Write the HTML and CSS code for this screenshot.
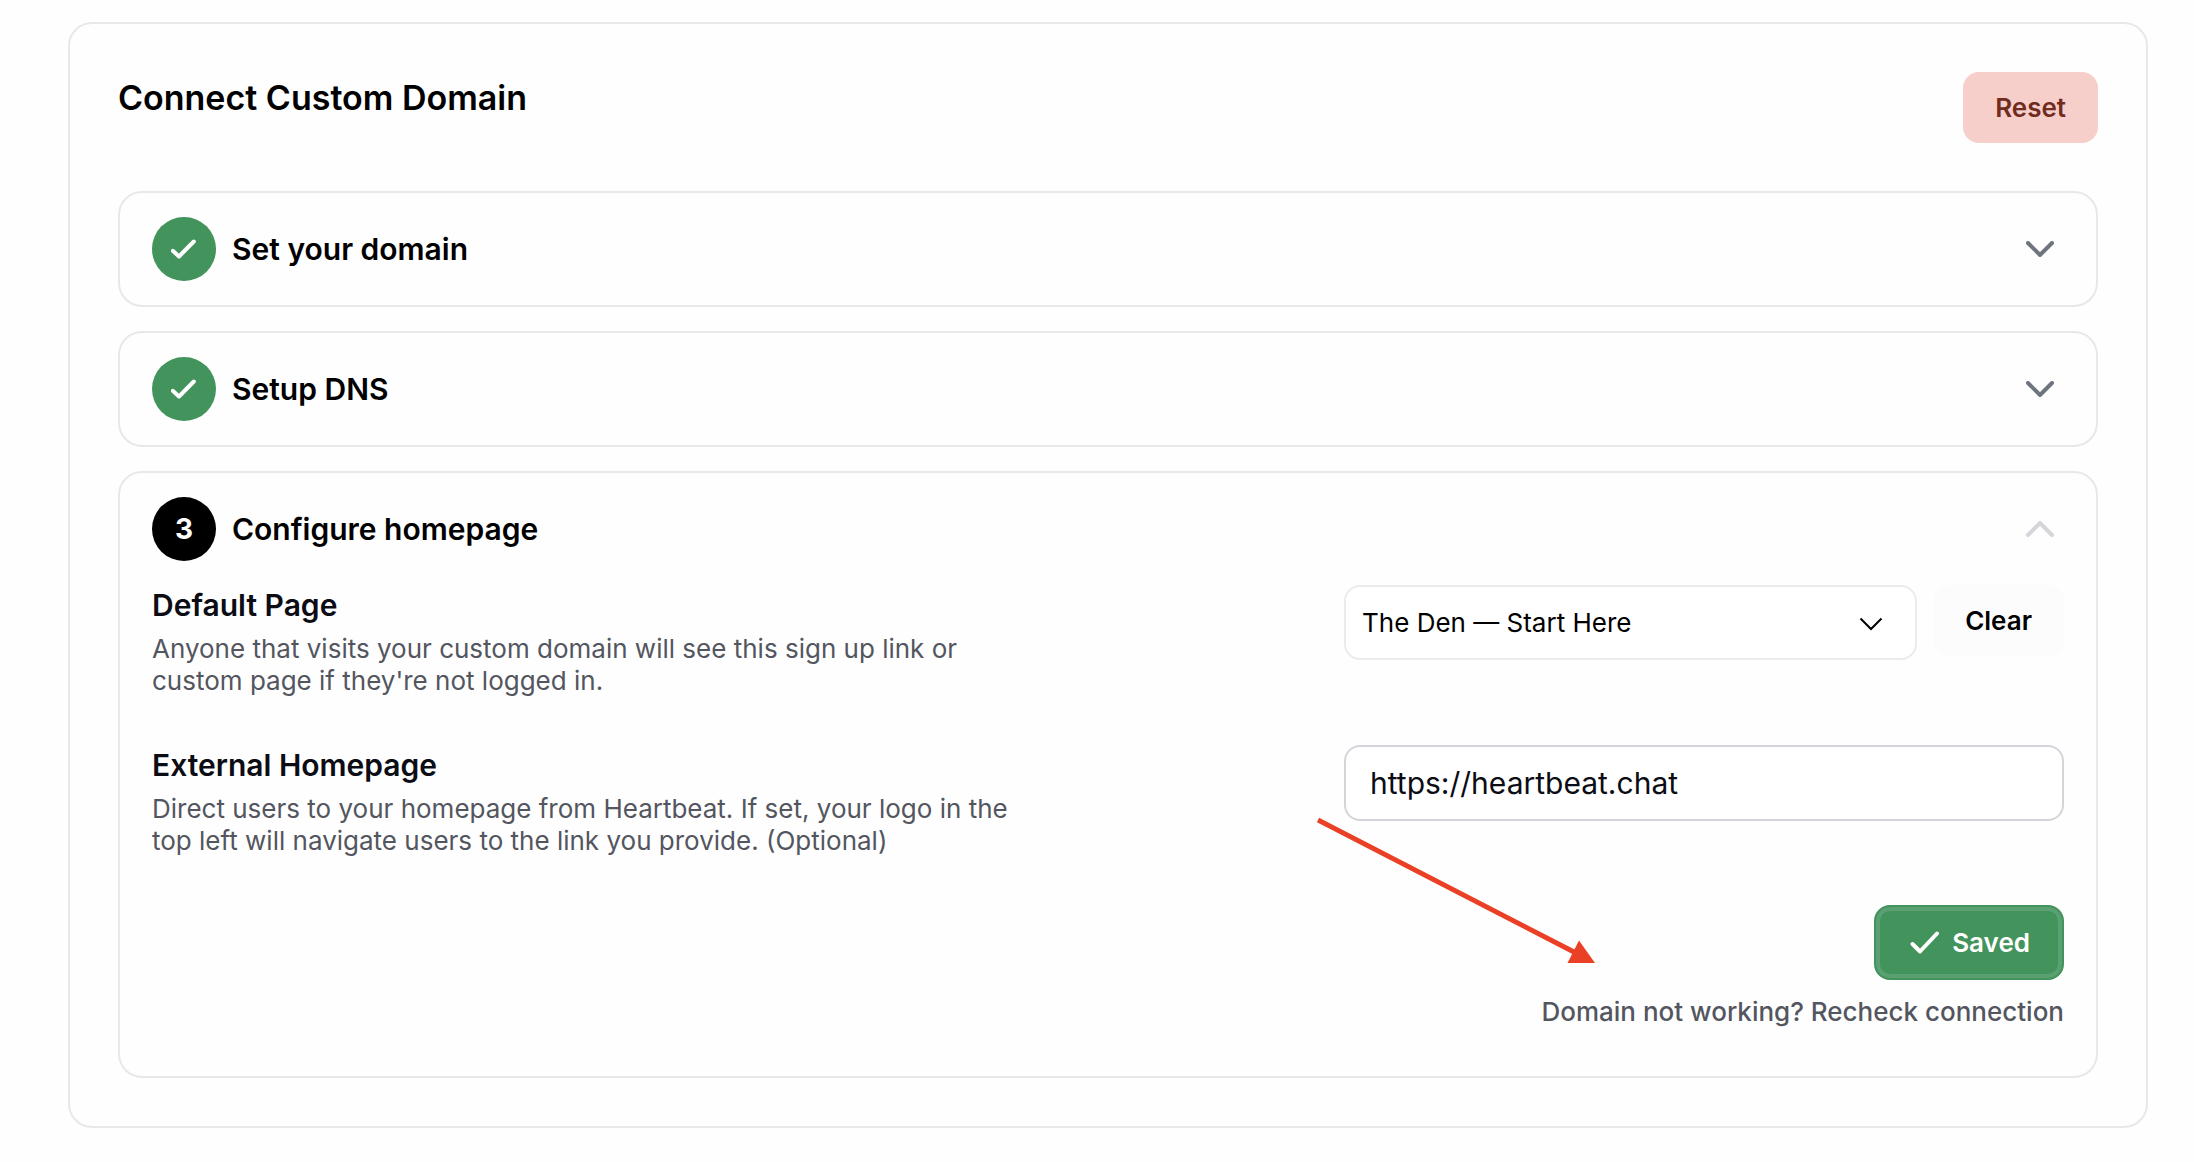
FILE: index.html
```html
<!DOCTYPE html>
<html lang="en">
<head>
    <meta charset="UTF-8">
    <meta name="viewport" content="width=device-width, initial-scale=1.0">
    <title>Connect Custom Domain</title>
    <link rel="stylesheet" href="styles.css">
</head>
<body>

    <main class="card">
        <header class="card-header">
            <h1>Connect Custom Domain</h1>
            <button type="button" class="btn btn-danger">Reset</button>
        </header>

        <div class="steps">
            <section class="step">
                <button type="button" class="step-header" aria-expanded="false">
                    <span class="step-badge done">
                        <svg width="26" height="20" viewBox="0 0 26 20" aria-hidden="true">
                            <path d="M1.800 11.800 L8 17.500 L22.800 2.500" />
                        </svg>
                    </span>
                    <span class="step-title">Set your domain</span>
                    <svg class="step-chevron" width="28" height="16" viewBox="0 0 28 16" aria-hidden="true">
                        <path d="M2 2 L14 14 L26 2" />
                    </svg>
                </button>
            </section>

            <section class="step">
                <button type="button" class="step-header" aria-expanded="false">
                    <span class="step-badge done">
                        <svg width="26" height="20" viewBox="0 0 26 20" aria-hidden="true">
                            <path d="M1.800 11.800 L8 17.500 L22.800 2.500" />
                        </svg>
                    </span>
                    <span class="step-title">Setup DNS</span>
                    <svg class="step-chevron" width="28" height="16" viewBox="0 0 28 16" aria-hidden="true">
                        <path d="M2 2 L14 14 L26 2" />
                    </svg>
                </button>
            </section>

            <section class="step">
                <button type="button" class="step-header" aria-expanded="true">
                    <span class="step-badge">3</span>
                    <span class="step-title">Configure homepage</span>
                    <svg class="step-chevron open" width="28" height="16" viewBox="0 0 28 16" aria-hidden="true">
                        <path d="M2 14 L14 2 L26 14" />
                    </svg>
                </button>

                <form class="step-body">
                    <div class="field">
                        <div class="field-text">
                            <label for="defaultPage">Default Page</label>
                            <p>Anyone that visits your custom domain will see this sign up link or custom page if they're not logged in.</p>
                        </div>
                        <div class="field-control">
                            <div class="select-wrap">
                                <select id="defaultPage" name="default_page">
                                    <option>The Den — Start Here</option>
                                </select>
                                <svg width="24" height="14" viewBox="0 0 24 14" aria-hidden="true">
                                    <path d="M1.5 1.5 L12 12 L22.5 1.5" />
                                </svg>
                            </div>
                            <button type="button" class="btn btn-light">Clear</button>
                        </div>
                    </div>

                    <div class="field">
                        <div class="field-text">
                            <label for="externalHomepage">External Homepage</label>
                            <p>Direct users to your homepage from Heartbeat. If set, your logo in the top left will navigate users to the link you provide. (Optional)</p>
                        </div>
                        <div class="field-control">
                            <input type="text" id="externalHomepage" name="external_homepage" value="https://heartbeat.chat">
                        </div>
                    </div>

                    <div class="actions">
                        <button type="submit" class="btn btn-saved">
                            <svg width="30" height="24" viewBox="0 0 30 24" aria-hidden="true">
                                <path d="M2.5 13 L10 20.5 L27 2.5" />
                            </svg>
                            Saved
                        </button>
                        <a href="#">Domain not working? Recheck connection</a>
                    </div>

                    <!-- points at the recheck link -->
                    <svg class="pointer" width="280" height="148" viewBox="0 0 280 148" aria-hidden="true">
                        <path class="pointer-line" d="M1 3 L257 135" />
                        <path class="pointer-head" d="M278 146 L262 123.500 L250.500 146 Z" />
                    </svg>
                </form>
            </section>
        </div>
    </main>

</body>
</html>
```
FILE: styles.css
```css
* {
    box-sizing: border-box;
    margin: 0;
    padding: 0;
}
body {
    font-family: Inter, "Liberation Sans", sans-serif;
    background: #fefefe;
    color: #000;
    padding: 22px 46px 34px 68px;
}
button, input, select {
    font-family: inherit;
    color: inherit;
}
svg {
    fill: none;
    flex-shrink: 0;
}

/* Card */
.card {
    border: 2px solid #e8e8e9;
    border-radius: 24px;
    padding: 48px;
}
.card-header {
    display: flex;
    justify-content: space-between;
    align-items: flex-start;
    margin-bottom: 48px;
}
h1 {
    font-size: 34px;
    line-height: 52px;
    font-weight: 600;
}

/* Buttons */
.btn {
    height: 71px;
    padding: 0 32px;
    border: none;
    border-radius: 16px;
    font-size: 26px;
    font-weight: 600;
    cursor: pointer;
}
.btn-danger {
    background: #f6cfcb;
    color: #722b1f;
}
.btn-light {
    background: #fcfcfc;
}
.btn-saved {
    display: flex;
    align-items: center;
    gap: 12px;
    height: 75px;
    padding: 0 32px 0 34px;
    border: 2px solid #43935c;
    background: #43935c;
    box-shadow: inset 0 0 0 4px #5ba072;
    color: #fff;
}
.btn-saved svg {
    stroke: #fff;
    stroke-width: 4;
    stroke-linecap: round;
    stroke-linejoin: round;
}

/* Steps */
.steps {
    display: flex;
    flex-direction: column;
    gap: 24px;
}
.step {
    border: 2px solid #e8e8e9;
    border-radius: 24px;
    padding: 24px 32px;
}
.step-header {
    display: flex;
    align-items: center;
    gap: 16px;
    width: 100%;
    padding-right: 10px;
    border: none;
    background: none;
    text-align: left;
    cursor: pointer;
}
.step-badge {
    display: flex;
    align-items: center;
    justify-content: center;
    width: 64px;
    height: 64px;
    border-radius: 50%;
    background: #000;
    color: #fff;
    font-size: 28px;
    font-weight: 700;
}
.step-badge.done {
    background: #43935c;
}
.step-badge svg {
    stroke: #fff;
    stroke-width: 4;
    stroke-linecap: round;
    stroke-linejoin: round;
}
.step-title {
    flex: 1;
    font-size: 30px;
    font-weight: 600;
}
.step-chevron {
    stroke: #6f757e;
    stroke-width: 4;
    stroke-linecap: round;
    stroke-linejoin: round;
}
.step-chevron.open {
    stroke: #d4d6da;
}

/* Homepage form */
.step-body {
    position: relative;
    display: flex;
    flex-direction: column;
    gap: 48px;
    padding: 24px 0;
}
.field {
    display: flex;
    justify-content: space-between;
    align-items: flex-start;
}
.field-text {
    display: flex;
    flex-direction: column;
    gap: 8px;
    max-width: 880px;
}
.field-text label {
    font-size: 30px;
    line-height: 40px;
    font-weight: 600;
    color: #0b0c14;
}
.field-text p {
    font-size: 26px;
    line-height: 32px;
    color: #53565f;
}
.field-control {
    display: flex;
    align-items: flex-start;
    gap: 16px;
    width: 720px;
}
.select-wrap {
    position: relative;
    flex: 1;
}
.select-wrap select {
    width: 100%;
    height: 75px;
    padding: 0 64px 0 16px;
    border: 2px solid #ebebec;
    border-radius: 16px;
    background: #fff;
    font-size: 26px;
    appearance: none;
}
.select-wrap svg {
    position: absolute;
    top: 32px;
    right: 34px;
    stroke: #000;
    stroke-width: 2;
    pointer-events: none;
}
.field-control input {
    width: 100%;
    height: 76px;
    padding: 0 24px;
    border: 2px solid #d4d5da;
    border-radius: 16px;
    background: #fff;
    color: #0b0c14;
    font-size: 30px;
}
.actions {
    display: flex;
    flex-direction: column;
    align-items: flex-end;
    gap: 16px;
}
.actions a {
    font-size: 26px;
    line-height: 32px;
    font-weight: 500;
    color: #53565f;
    text-decoration: none;
}
.pointer {
    position: absolute;
    right: 467px;
    bottom: 87px;
    pointer-events: none;
}
.pointer-line {
    stroke: #ea4025;
    stroke-width: 5;
}
.pointer-head {
    fill: #ea4025;
}
```
